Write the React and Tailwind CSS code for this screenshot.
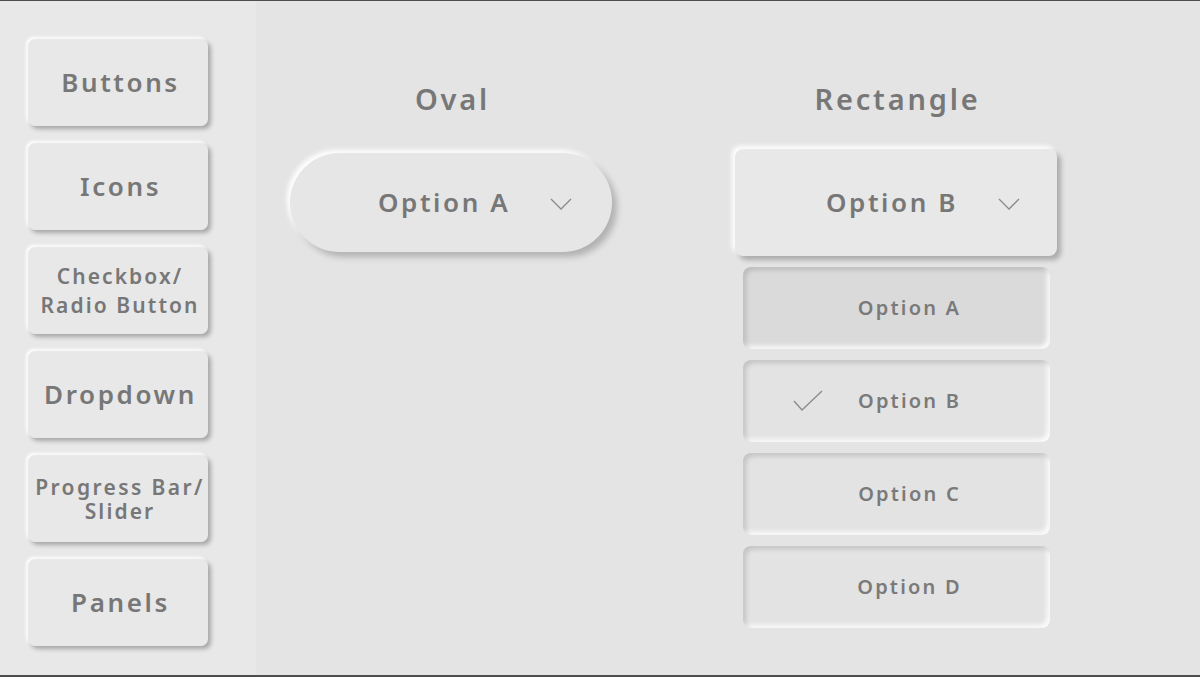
import React from "react";

const raised =
  "shadow-[3px_3px_4px_rgba(0,0,0,0.28),-2px_-2px_3px_rgba(255,255,255,0.95)]";
const inset =
  "shadow-[inset_3px_3px_5px_rgba(0,0,0,0.14),inset_-3px_-3px_5px_rgba(255,255,255,0.9)]";

function NavButton({ children, small }) {
  return (
    <div
      className={`w-[180px] h-[87px] rounded-[7px] bg-[#e8e8e8] ${raised} flex items-center justify-center text-center text-[#777777] font-semibold ${
        small
          ? "text-[21px] leading-[29px] tracking-[2.1px] pl-[4px]"
          : "text-[26px] tracking-[2.6px] pl-[5px]"
      }`}
    >
      {children}
    </div>
  );
}

function Chevron() {
  return (
    <svg width="22" height="12" viewBox="0 0 22 12" fill="none">
      <path d="M1 1 L11 11 L21 1" stroke="#8a8a8a" strokeWidth="1.3" />
    </svg>
  );
}

function Check() {
  return (
    <svg width="30" height="22" viewBox="0 0 30 22" fill="none">
      <path d="M1 11 L9 20 L29 1" stroke="#8a8a8a" strokeWidth="1.3" />
    </svg>
  );
}

function Option({ label, checked, hover }) {
  return (
    <div
      className={`relative h-[82px] rounded-[8px] ${
        hover ? "bg-[#dadada]" : "bg-[#e3e3e3]"
      } ${inset} flex items-center justify-center text-[20px] tracking-[2.2px] font-semibold text-[#7a7a7a]`}
    >
      {checked && (
        <span className="absolute left-[50px] top-[30px]">
          <Check />
        </span>
      )}
      <span className="ml-[26px]">{label}</span>
    </div>
  );
}

export default function App() {
  return (
    <div
      className="w-[1200px] h-[677px] flex border-t border-b-2 border-[#4d4d4d] bg-[#e4e4e4] overflow-hidden"
      style={{ fontFamily: '"Noto Sans", "Open Sans", sans-serif' }}
    >
      <aside className="w-[256px] h-full bg-[#e8e8e8] pt-[38px] pl-[28px] flex flex-col gap-[17px]">
        <NavButton>Buttons</NavButton>
        <NavButton>Icons</NavButton>
        <NavButton small>
          <div>
            Checkbox/
            <br />
            Radio Button
          </div>
        </NavButton>
        <NavButton>Dropdown</NavButton>
        <NavButton small>
          <div className="flex flex-col items-center">
            <span className="leading-[24px] whitespace-nowrap tracking-[2.4px]">Progress Bar/</span>
            <span className="leading-[24px]">Slider</span>
          </div>
        </NavButton>
        <NavButton>Panels</NavButton>
      </aside>
      <main className="flex-1 pl-[34px] pt-[78px] flex gap-[123px]">
        <div className="w-[322px] flex flex-col items-center">
          <div className="h-[40px] flex items-center pl-[3px] text-[29px] tracking-[2.8px] font-semibold text-[#777777]">
            Oval
          </div>
          <div className="h-[107px] mt-[30px] w-full flex items-center">
            <div className="w-full h-[99px] rounded-full bg-[#e6e6e6] shadow-[5px_5px_6px_rgba(0,0,0,0.22),-3px_-3px_5px_rgba(255,255,255,1)] flex items-center text-[#777777]">
              <span className="ml-[88px] text-[26px] tracking-[2.6px] font-semibold">
                Option A
              </span>
              <span className="ml-[40px] mt-[2px]">
                <Chevron />
              </span>
            </div>
          </div>
        </div>
        <div className="w-[322px] flex flex-col">
          <div className="h-[40px] flex items-center justify-center pl-[3px] text-[29px] tracking-[2.8px] font-semibold text-[#777777]">
            Rectangle
          </div>
          <div className="h-[107px] mt-[30px] w-full rounded-[8px] bg-[#e8e8e8] shadow-[4px_4px_5px_rgba(0,0,0,0.25),-3px_-3px_5px_rgba(255,255,255,1)] flex items-center text-[#777777]">
            <span className="ml-[91px] text-[26px] tracking-[2.6px] font-semibold">
              Option B
            </span>
            <span className="ml-[40px] mt-[2px]">
              <Chevron />
            </span>
          </div>
          <div className="mt-[11px] ml-[8px] mr-[7px] flex flex-col gap-[11px]">
            <Option label="Option A" hover />
            <Option label="Option B" checked />
            <Option label="Option C" />
            <Option label="Option D" />
          </div>
        </div>
      </main>
    </div>
  );
}
